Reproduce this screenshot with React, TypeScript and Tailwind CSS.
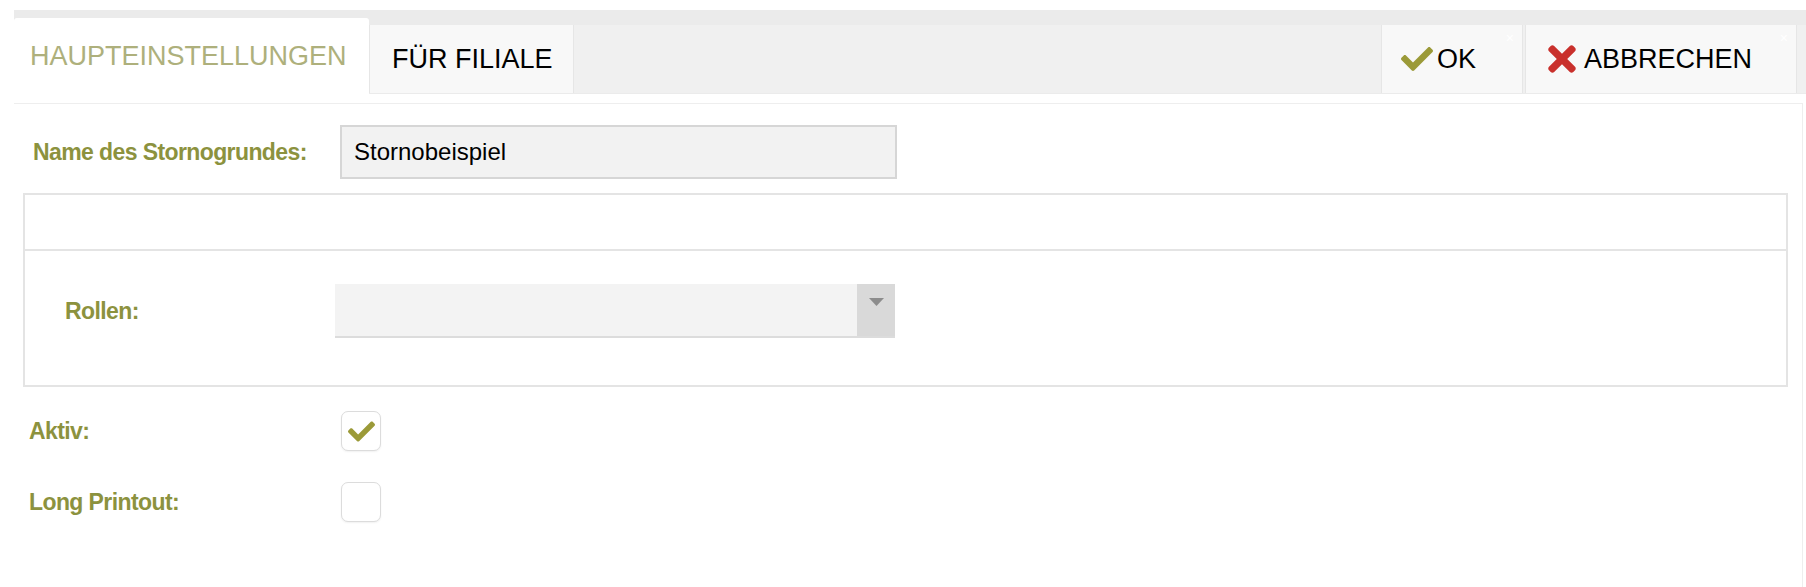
import { FaCheck, FaTimes } from "react-icons/fa";

const labelCls = "font-['Liberation_Sans',Arial,sans-serif] font-bold text-[23px] tracking-[-0.6px] text-[#8c923e] leading-none";

function Checkbox({ checked }: { checked: boolean }) {
  return (
    <div className="w-[40px] h-[40px] rounded-[7px] border-[1.5px] border-[#dcdcdc] bg-white shadow-[0_1px_2px_rgba(0,0,0,0.06)] flex items-center justify-center">
      {checked && <FaCheck className="w-[27px] h-[27px] text-[#9b9a38]" />}
    </div>
  );
}

export default function App() {
  return (
    <div className="w-[1806px] h-[587px] bg-white pt-[10px] pl-[14px] overflow-hidden font-['Liberation_Sans',Arial,sans-serif]">
      {/* tab strip */}
      <div className="h-[84px] bg-[#ebebeb] flex items-end">
        <div className="w-[355px] h-[76px] bg-white rounded-t-[3px] flex items-center pl-[16px] text-[27px] text-[#aeb07c] shrink-0">
          HAUPTEINSTELLUNGEN
        </div>
        <div className="flex-1 h-[68px] mb-[1px] bg-[#f0f0f0] flex">
          <div className="w-[205px] h-full bg-[#f8f8f8] border-x border-[#e6e6e6] flex items-center pl-[22px] text-[27px] text-black shrink-0">
            FÜR FILIALE
          </div>
          <div className="flex-1" />
          <button className="relative w-[142px] h-full bg-[#f8f8f8] border-x border-[#e6e6e6] flex items-center pl-[19px] gap-[4px] text-[27px] text-black">
            <FaCheck className="w-[32px] h-[32px] text-[#9b9a38]" />
            OK
            <span className="absolute top-[6px] right-[8px] text-[14px] leading-none text-white">×</span>
          </button>
          <button className="relative w-[272px] ml-[2px] h-full bg-[#f8f8f8] border-x border-[#e6e6e6] flex items-center pl-[22px] gap-[8px] text-[27px] text-black">
            <FaTimes className="w-[28px] h-[40px] text-[#c9302c]" />
            ABBRECHEN
            <span className="absolute top-[6px] right-[8px] text-[14px] leading-none text-white">×</span>
          </button>
          <div className="w-[9px]" />
        </div>
      </div>

      {/* content */}
      <div className="mt-[9px] mr-[3px] border-t border-r border-[#eeeeee] h-[484px]">
        <div className="flex items-center pl-[19px] pt-[21px]">
          <label className={`${labelCls} w-[307px] shrink-0`}>Name des Stornogrundes:</label>
          <div className="w-[557px] h-[54px] bg-[#f2f2f2] border-2 border-[#d6d6d6] flex items-center pl-[12px] text-[24px] text-black">
            Stornobeispiel
          </div>
        </div>

        <div className="ml-[9px] mr-[14px] mt-[14px] border-2 border-[#e4e4e4]">
          <div className="h-[56px] border-b-2 border-[#e4e4e4]" />
          <div className="h-[134px] flex items-start pt-[33px] pl-[40px]">
            <label className={`${labelCls} w-[270px] shrink-0 h-[54px] flex items-center`}>Rollen:</label>
            <div className="w-[560px] h-[54px] bg-[#f3f3f3] border-b-2 border-[#dcdcdc] flex justify-end">
              <div className="w-[38px] h-full bg-[#d9d9d9] flex justify-center pt-[14px]">
                <svg width="15" height="8" viewBox="0 0 15 8">
                  <path d="M0 0 H15 L7.5 8 Z" fill="#8c8c8c" />
                </svg>
              </div>
            </div>
          </div>
        </div>

        <div className="flex items-center pl-[15px] mt-[24px]">
          <label className={`${labelCls} w-[312px] shrink-0`}>Aktiv:</label>
          <Checkbox checked />
        </div>
        <div className="flex items-center pl-[15px] mt-[31px]">
          <label className={`${labelCls} w-[312px] shrink-0`}>Long Printout:</label>
          <Checkbox checked={false} />
        </div>
      </div>
    </div>
  );
}
